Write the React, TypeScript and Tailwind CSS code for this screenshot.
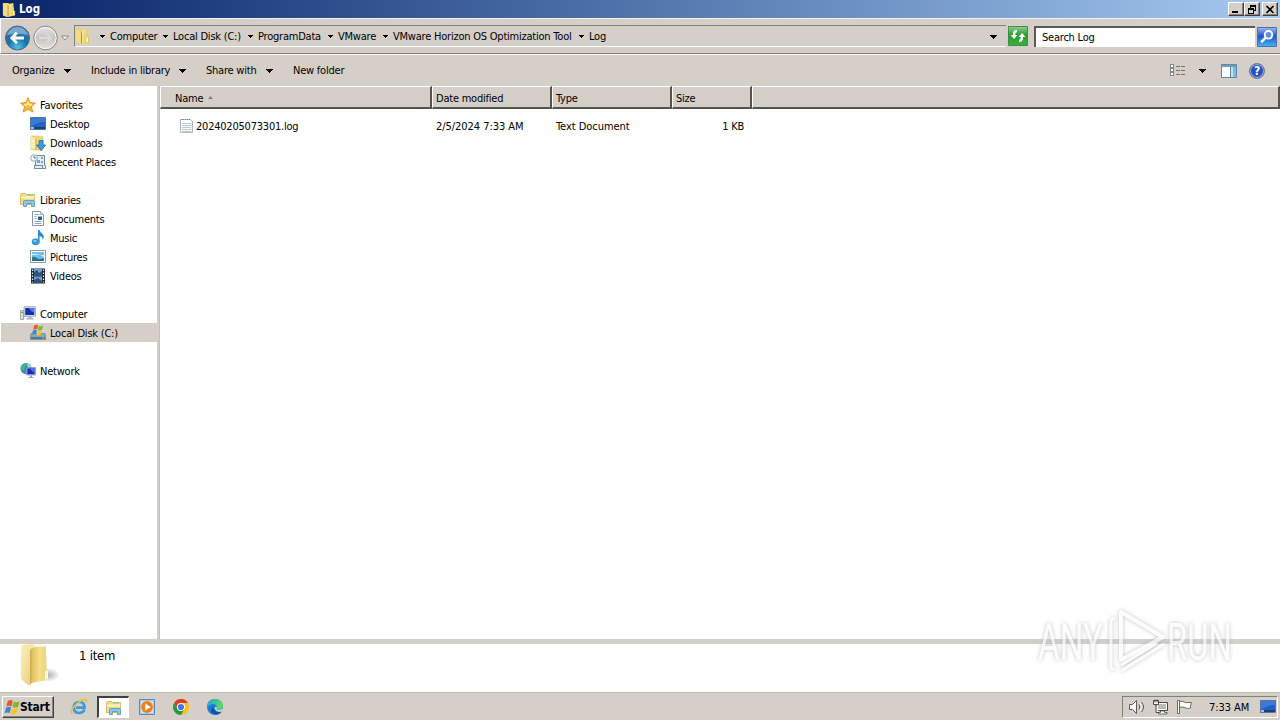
import type { ReactNode } from "react";

type IconProps = { className?: string };

function FolderIcon({ className = "h-4 w-4" }: IconProps) {
  return (
    <svg viewBox="0 0 16 16" className={`shrink-0 ${className}`}>
      <defs>
        <linearGradient id="folderFront" x1="0" x2="1" y1="0" y2="0.3">
          <stop offset="0" stopColor="#fdf3b0" />
          <stop offset="1" stopColor="#e3c650" />
        </linearGradient>
      </defs>
      <path d="M1 1h6l1 2v12l-3 1-4-2z" fill="#ecd168" />
      <path d="M6 2.500l6-1.500 1 8 1 1v4.500L6 16z" fill="url(#folderFront)" />
      <path d="M1 1l5 2.500V16l-5-2z" fill="#f3dc83" />
      <path d="M6 3.500L7 3v12.500l-1 .5z" fill="#b99232" />
      <path d="M11.500 9.500h1.500v4.500h-1.500z" fill="#fff" />
    </svg>
  );
}

function BigFolderIcon() {
  return (
    <svg viewBox="0 0 40 44" className="h-[44px] w-[40px] shrink-0">
      <defs>
        <linearGradient id="bigFront" x1="0" x2="1" y1="0" y2="0">
          <stop offset="0" stopColor="#dcbd5c" />
          <stop offset="0.5" stopColor="#f5e08a" />
          <stop offset="1" stopColor="#e8d07a" />
        </linearGradient>
        <linearGradient id="bigLeft" x1="0" x2="1" y1="0" y2="1">
          <stop offset="0" stopColor="#fbf0bd" />
          <stop offset="1" stopColor="#ecd07c" />
        </linearGradient>
        <radialGradient id="bigShadow">
          <stop offset="0" stopColor="#888" stopOpacity="0.7" />
          <stop offset="1" stopColor="#888" stopOpacity="0" />
        </radialGradient>
      </defs>
      <ellipse cx="27" cy="31" rx="13" ry="7" fill="url(#bigShadow)" />
      <path d="M2 1l10-1 3 2 11 1v33l-15 3z" fill="#f6e7a6" />
      <path d="M11 4l15-1.500.5 22 1.500 2v8l-2 1.500L11 39z" fill="url(#bigFront)" />
      <path d="M1 1l9 4q1 .5 1 2v32q-1 3-3 2l-6-5-1-2z" fill="url(#bigLeft)" />
      <path d="M10 5.500l1.500 1v32L10 41z" fill="#cfae58" />
      <path d="M25 27.500q3-3 3 1v6.500l-3 1z" fill="#fffbe0" />
    </svg>
  );
}

function StarIcon() {
  return (
    <svg viewBox="0 0 16 16" className="h-4 w-4 shrink-0">
      <path
        d="M8 .7l2.200 4.900 5.200.5-3.900 3.600 1.300 5.300L8 12.300 3.200 15l1.300-5.300L.6 6.100l5.200-.5z"
        fill="#fbb630"
        stroke="#e08a1c"
        strokeWidth="0.900"
      />
      <path d="M8 3l1.300 3.600 3.500.4-2.600 2.200L8 8 5 9.200 3.500 7l3-.4z" fill="#ffe79a" />
    </svg>
  );
}

function DesktopIcon({ className = "h-4 w-4" }: IconProps) {
  return (
    <svg viewBox="0 0 16 16" className={`shrink-0 ${className}`}>
      <path d="M.5 1.500h15v12H.5z" fill="#1b4fae" stroke="#56749f" />
      <path d="M1 2h14v4q-6 0-14 5z" fill="#3b7ad8" />
      <path d="M1 11q7-5 14-5v5z" fill="#2360c2" />
      <path d="M1 11h14v2H1z" fill="#1a3c78" />
      <path d="M1 11h3v2H1z" fill="#8cc7f0" />
    </svg>
  );
}

function DownloadsIcon() {
  return (
    <svg viewBox="0 0 16 16" className="h-4 w-4 shrink-0">
      <path d="M1 1h7l2 1 3-.5V15H4l-3-1z" fill="#f0d975" stroke="#d9b74c" strokeWidth="0.600" />
      <path d="M1 1l4.500 3v11L1 13z" fill="#fbefaf" />
      <path d="M5.500 4h1v11h-1z" fill="#c9a640" />
      <path
        d="M9 5.500h4V10h2.800L11 15.600 6.500 10H9z"
        fill="#3b9ade"
        stroke="#1f6dad"
        strokeWidth="0.800"
      />
    </svg>
  );
}

function RecentIcon() {
  return (
    <svg viewBox="0 0 16 16" className="h-4 w-4 shrink-0">
      <path d="M5.500 1.500h9v10h1v3h-11v-3h1z" fill="#e4edf3" stroke="#71889a" />
      <path d="M7 6h3v3H7zM11 3h2v2h-2zM11 7h2v2h-2z" fill="#7ba4c0" />
      <path d="M4.500 11.500h8v3" fill="none" stroke="#71889a" />
      <circle cx="4" cy="4" r="3.300" fill="#f5f9fc" stroke="#8a9dac" strokeWidth="0.900" />
      <path d="M4 2v2h2" fill="none" stroke="#4f687d" strokeWidth="0.900" />
    </svg>
  );
}

function LibraryIcon({ className = "h-4 w-4" }: IconProps) {
  return (
    <svg viewBox="0 0 16 16" className={`shrink-0 ${className}`}>
      <path d="M.5 2.500l1-1h4l1 1h8v10H.5z" fill="#f1dc83" stroke="#cfae4c" strokeWidth="0.800" />
      <path d="M7 2h6v1.500H7z" fill="#8fc785" />
      <path d="M1 4.500h13.500v2H1z" fill="#fdf6ca" />
      <path
        d="M3.500 14.500v-5q0-1 1-1h9q1 0 1 1v5h-3v-3h-5v3z"
        fill="#8ac9ec"
        stroke="#4b94c4"
        strokeWidth="0.800"
      />
    </svg>
  );
}

function DocumentIcon() {
  return (
    <svg viewBox="0 0 16 16" className="h-4 w-4 shrink-0">
      <path d="M2.500.5h8l3 3v11h-11z" fill="#fff" stroke="#8795a3" />
      <path d="M10.500.5v3h3" fill="#dfe6ec" stroke="#8795a3" strokeWidth="0.700" />
      <path d="M4.500 3.500h5M4.500 5.500h2M4.500 7.500h2M4.500 10.500h7M4.500 12.500h7" stroke="#86a9cc" />
      <path d="M8 5.500h4V9H8z" fill="#285b97" />
    </svg>
  );
}

function MusicIcon() {
  return (
    <svg viewBox="0 0 16 16" className="h-4 w-4 shrink-0">
      <path d="M8 0h1.500q.5 2.500 3 4 2.200 2 .3 6-.1-3.500-3.300-4V12H8z" fill="#2d88ce" />
      <ellipse cx="5.700" cy="11.800" rx="4" ry="3.400" fill="#3597da" />
      <ellipse cx="5" cy="11" rx="1.800" ry="1.100" fill="#8fd0f7" />
    </svg>
  );
}

function PictureIcon() {
  return (
    <svg viewBox="0 0 16 16" className="h-4 w-4 shrink-0">
      <path d="M.5 1.500h15v12H.5z" fill="#fff" stroke="#8d9aa6" />
      <path d="M2 3h12v9H2z" fill="#70bde8" />
      <path d="M2 5q5-1 12 3V6H2z" fill="#d2effb" />
      <path d="M2 8q3-1 5 1t7 0v3H2z" fill="#2e7f82" />
      <path d="M2 10.500h12V12H2z" fill="#2769a8" />
    </svg>
  );
}

function VideoIcon() {
  return (
    <svg viewBox="0 0 16 16" className="h-4 w-4 shrink-0">
      <path d="M1 .5h14v15H1z" fill="#20242b" />
      <path d="M4 1h8v6.500H4zM4 8.500h8V15H4z" fill="#6aa5d2" />
      <path d="M4 4l3-2 2 3 3-2v4.500H4zM4 12l4-2 4 3v2H4z" fill="#2b5485" />
      <path
        d="M2.500 1.500v13M13.500 1.500v13"
        stroke="#e6edf2"
        strokeWidth="1.300"
        strokeDasharray="1.500 1.500"
      />
    </svg>
  );
}

function ComputerIcon() {
  return (
    <svg viewBox="0 0 16 16" className="h-4 w-4 shrink-0">
      <path d="M.5 4.500h3v9h-3z" fill="#d8dee0" stroke="#8b9798" strokeWidth="0.800" />
      <path d="M1 6h2v1H1z" fill="#59b34c" />
      <path d="M4 .8h11.500v9.500H4z" fill="#dce3ee" stroke="#8d99b5" strokeWidth="0.800" />
      <path d="M5.200 2h9.100v7H5.200z" fill="#1a2fae" />
      <path d="M9 2h5.300v4.500q-3-.5-5.300-4.500z" fill="#5578e2" />
      <path d="M8.500 10.500h3v1.500h2v1.500h-7V12h2z" fill="#a8b2c0" />
    </svg>
  );
}

function FlagPanes() {
  return (
    <>
      <path d="M3.500 2.500q2.500-1.800 4.800-.2L7 7.600q-2.300-1.500-4.900.2z" fill="#e8572a" />
      <path d="M9.300 2.800q2.500 1.400 5.400-.2l-1.500 5.300q-2.700 1.500-5.200.1z" fill="#7cba36" />
      <path d="M1.900 8.700q2.500-1.600 4.800-.2l-1.400 5.200Q3 12.300.4 13.900z" fill="#3b86d6" />
      <path d="M7.700 9q2.500 1.400 5.300-.2l-1.500 5.300q-2.600 1.600-5.200.2z" fill="#fbc32a" />
    </>
  );
}

function WindowsFlag({ className = "h-4 w-4" }: IconProps) {
  return (
    <svg viewBox="0 0.5 15 15" className={`shrink-0 ${className}`}>
      <FlagPanes />
    </svg>
  );
}

function DiskIcon() {
  return (
    <svg viewBox="0 0 16 16" className="h-4 w-4 shrink-0">
      <path d="M1 8.500h14l.7 2v4H.3v-4z" fill="#8ea7b5" stroke="#5f7684" strokeWidth="0.600" />
      <path d="M1 12h14v2H1z" fill="#4c7d96" />
      <path d="M12 12.500h2v1h-2z" fill="#6fe05a" />
      <g transform="translate(1.500 -1.500) scale(.8)">
        <FlagPanes />
      </g>
    </svg>
  );
}

function NetworkIcon() {
  return (
    <svg viewBox="0 0 16 16" className="h-4 w-4 shrink-0">
      <circle cx="6" cy="5.500" r="5.500" fill="#2c8fc4" />
      <path d="M1.500 3q2-2.700 5-2.500 1 2-1 3t-1 3-3 1q-1.500-2 0-4.500z" fill="#4fb374" />
      <path d="M7 1q3 0 4 3l-3 1z" fill="#9fdcf4" />
      <path d="M6.500 4.500h9v7.500h-9z" fill="#cfd9ea" stroke="#7584a8" strokeWidth="0.700" />
      <path d="M7.300 5.300h7.400v6H7.300z" fill="#172cb4" />
      <path d="M10.500 5.300h4.200v4q-3.200 0-4.200-4z" fill="#5273e4" />
      <path d="M10 12.500h2V14h1.500v1h-5v-1H10z" fill="#9aa5ba" />
    </svg>
  );
}

function TextFileIcon() {
  return (
    <svg viewBox="0 0 16 16" className="h-4 w-4 shrink-0">
      <path d="M1.500 1.500h10l2 2v11h-12z" fill="#fbfcfd" stroke="#b3b8bd" />
      <path d="M3 5.500h9M3 7.500h9M3 9.500h9M3 11.500h9M3 13.500h9" stroke="#bccbd3" />
      <path d="M2 1.500h9" stroke="#777f86" strokeDasharray="1 1" />
    </svg>
  );
}

function BackForward() {
  return (
    <svg viewBox="0 0 66 28" className="mt-[3px] h-7 w-[66px] shrink-0">
      <defs>
        <radialGradient id="backFill" cx="0.5" cy="0.900" r="0.850">
          <stop offset="0" stopColor="#4fc3ec" />
          <stop offset="0.500" stopColor="#1470ae" />
          <stop offset="1" stopColor="#3e78a8" />
        </radialGradient>
        <linearGradient id="fwdFill" x1="0" x2="0" y1="0" y2="1">
          <stop offset="0" stopColor="#e9e8e6" />
          <stop offset="0.500" stopColor="#c5c3c0" />
          <stop offset="1" stopColor="#e6e4e1" />
        </linearGradient>
      </defs>
      <circle cx="13.500" cy="14" r="12" fill="url(#backFill)" stroke="#51667c" />
      <path d="M3 11q3-8 10.500-8T24 11q-10-2-21 0z" fill="#a5c9e2" opacity="0.600" />
      <path d="M20 14H8.500M13 8.800L7.800 14l5.200 5.200" fill="none" stroke="#fff" strokeWidth="2.800" />
      <circle cx="41.500" cy="14" r="11.800" fill="url(#fwdFill)" stroke="#85878a" />
      <circle cx="41.500" cy="14" r="10.600" fill="none" stroke="#f5f5f4" />
      <path d="M35 14h12M42.500 9.500L47 14l-4.500 4.500" fill="none" stroke="#dcdad7" strokeWidth="2.200" />
      <path d="M57.500 12h7L61 16z" fill="#f4f2ef" stroke="#85827d" strokeWidth="0.900" />
    </svg>
  );
}

function Caret({ className = "" }: IconProps) {
  return (
    <svg viewBox="0 0 7 4" className={`h-1 w-[7px] shrink-0 ${className}`} shapeRendering="crispEdges">
      <path d="M0 0h7v1H0zM1 1h5v1H1zM2 2h3v1H2zM3 3h1v1H3z" fill="#000" />
    </svg>
  );
}

function SmallCaret({ className = "" }: IconProps) {
  return (
    <svg viewBox="0 0 5 3" className={`h-[3px] w-[5px] shrink-0 ${className}`} shapeRendering="crispEdges">
      <path d="M0 0h5v1H0zM1 1h3v1H1zM2 2h1v1H2z" fill="#000" />
    </svg>
  );
}

function RefreshIcon() {
  return (
    <svg viewBox="0 0 20 20" className="h-5 w-5 shrink-0">
      <defs>
        <linearGradient id="refreshFill" x1="0" x2="0" y1="0" y2="1">
          <stop offset="0" stopColor="#8fd18f" />
          <stop offset="0.450" stopColor="#279a32" />
          <stop offset="1" stopColor="#38b53c" />
        </linearGradient>
      </defs>
      <path d="M.5.5h19v19H.5z" fill="url(#refreshFill)" stroke="#3f8d48" />
      <path d="M9 4Q4.500 4 5 9H2.500L6 13l3.500-4H7.300Q7 6.500 9 6z" fill="#fff" />
      <path d="M11 16q4.500 0 4-5h2.500L14 7l-3.500 4h2.200q.3 2.500-1.700 3z" fill="#fff" />
    </svg>
  );
}

function SearchIcon() {
  return (
    <svg viewBox="0 0 20 20" className="h-5 w-5 shrink-0">
      <defs>
        <linearGradient id="searchFill" x1="0" x2="0" y1="0" y2="1">
          <stop offset="0" stopColor="#9db8ee" />
          <stop offset="0.450" stopColor="#2453ca" />
          <stop offset="1" stopColor="#43b5f5" />
        </linearGradient>
      </defs>
      <path d="M.5.5h19v19H.5z" fill="url(#searchFill)" stroke="#4c6fae" />
      <circle cx="11.500" cy="7.800" r="3.800" fill="#5b8ce6" stroke="#fff" strokeWidth="1.900" />
      <path d="M8.700 10.600l-4.500 4.500" stroke="#fff" strokeWidth="2.600" />
    </svg>
  );
}

function ViewIcon() {
  return (
    <svg viewBox="0 0 16 13" className="h-[13px] w-4 shrink-0" shapeRendering="crispEdges">
      <path d="M.5.5h3v3h-3zM.5 4.500h3v3h-3zM.5 8.500h3v3h-3z" fill="#fff" stroke="#83878c" />
      <path d="M6 2.500h4M11 2.500h4M6 6.500h4M11 6.500h4M6 10.500h4M11 10.500h4" stroke="#6f7276" />
    </svg>
  );
}

function PreviewIcon() {
  return (
    <svg viewBox="0 0 16 14" className="h-[14px] w-4 shrink-0">
      <path d="M.5.5h15v13H.5z" fill="#fff" stroke="#5f86a5" />
      <path d="M1 1h14v2H1z" fill="#6e9dc0" />
      <path d="M10 3h5v10h-5z" fill="#79bfe0" />
      <path d="M10 3h2v10h-2z" fill="#bfe3f2" />
      <path d="M9.500 3v10" stroke="#5f86a5" />
    </svg>
  );
}

function HelpIcon() {
  return (
    <span className="flex h-4 w-4 items-center justify-center rounded-full border border-[#74829f] bg-[#2b50bd] text-[12px] leading-none font-bold text-white shadow-[inset_0_0_0_1px_#93a9e0]">
      ?
    </span>
  );
}

function IeIcon() {
  return (
    <svg viewBox="0 0 18 18" className="h-[18px] w-[18px]">
      <path
        d="M14.500 11.500Q13 15 9.200 15 4 15 3.700 9.600 4 4.200 9.200 4t5.400 5.700H6"
        fill="none"
        stroke="#3d9bdc"
        strokeWidth="2.700"
      />
      <path
        d="M2.500 16Q-.5 14 4 8.500T14.500 1.500q3-.5 1.800 3"
        fill="none"
        stroke="#e9bd3b"
        strokeWidth="1.500"
      />
    </svg>
  );
}

function MediaIcon() {
  return (
    <svg viewBox="0 0 16 16" className="h-4 w-4">
      <path d="M.5.5h15v15H.5z" fill="#a7cbea" stroke="#5589b9" />
      <path d="M2 2h12v12H2z" fill="#cfe2f2" />
      <circle cx="8" cy="8" r="5.900" fill="#f07f18" />
      <path d="M6.200 4.500L11.700 8l-5.500 3.500z" fill="#fff" />
    </svg>
  );
}

function ChromeIcon() {
  return (
    <svg viewBox="0 0 16 16" className="h-4 w-4">
      <circle cx="8" cy="8" r="8" fill="#fbc116" />
      <path d="M1.070 4A8 8 0 0 1 14.930 4H8a4 4 0 0 0-3.460 6z" fill="#e33b2e" />
      <path d="M1.070 4A8 8 0 0 0 8 16l3.460-6a4 4 0 0 1-6.920 0z" fill="#229a4b" />
      <circle cx="8" cy="8" r="4" fill="#fff" />
      <circle cx="8" cy="8" r="3.100" fill="#3b78e7" />
    </svg>
  );
}

function EdgeIcon() {
  return (
    <svg viewBox="0 0 16 16" className="h-4 w-4">
      <defs>
        <linearGradient id="edgeTop" x1="0" x2="1" y1="0" y2="0.300">
          <stop offset="0" stopColor="#279ee3" />
          <stop offset="1" stopColor="#5cda64" />
        </linearGradient>
      </defs>
      <circle cx="8" cy="8" r="8" fill="#1a7fd4" />
      <path
        d="M0 8.500Q0 0 8 0q7.500.2 8 6.500 0 4-4 4.200-2.800 0-2.500-1.500 1.200-1.500-.2-3Q4.500 3 0 8.500z"
        fill="url(#edgeTop)"
      />
      <path d="M9.500 9.300q-.2 1.700 2.500 1.600 2-.1 3.600-1.400l1 1-1.600 1.800q-5 2-7.500-2.500 0-2 1.900-2.400 1 .9.100 1.900z" fill="#d5cfc8" />
      <path d="M6.500 8q.4 6 8 5.300l-1.300 1Q8 17 4.500 13.500 3 9.500 6.500 8z" fill="#1552a0" />
    </svg>
  );
}

function SpeakerIcon() {
  return (
    <svg viewBox="0 0 18 16" className="h-4 w-[18px]">
      <path d="M1.500 5.500h3l4-4v13l-4-4h-3z" fill="#fff" stroke="#5f5c58" />
      <path d="M11 5.500q1.500 2.500 0 5M13.500 3q4 5 0 10" fill="none" stroke="#5f5c58" />
      <path d="M12.200 4.200q2.800 3.800 0 7.600" fill="none" stroke="#fff" />
    </svg>
  );
}

function TrayNetworkIcon() {
  return (
    <svg viewBox="0 0 17 16" className="h-4 w-[17px]">
      <path d="M4.500 3.500h11v8h-11z" fill="#bdbab5" stroke="#4e4b48" />
      <path d="M5.500 4.500h9v6h-9z" fill="none" stroke="#fff" />
      <path d="M8.500 12h4v1.500H15v1.500H6.500v-1.500h2z" fill="#fff" stroke="#4e4b48" strokeWidth="0.800" />
      <path d="M1.500 1.500h5v4h-5zM4 5.500v8h3" fill="#fff" stroke="#4e4b48" />
      <path d="M3 .5v3M5 .5v3" stroke="#4e4b48" />
    </svg>
  );
}

function FlagIcon() {
  return (
    <svg viewBox="0 0 17 16" className="h-4 w-[17px]">
      <path d="M1.500 1.500h2v13h-2z" fill="#fff" stroke="#5f5c58" strokeWidth="0.900" />
      <path d="M3.500 2.500q3-1 5 .7 1.500 1 3 .3h4q-1 2-1 5.500-3 1.200-5.500-.3-2-1.300-5.500-.2z" fill="#fff" stroke="#5f5c58" strokeWidth="0.900" />
    </svg>
  );
}

const crumbs = [
  { name: "Computer", width: "w-[47px]" },
  { name: "Local Disk (C:)", width: "w-[69px]" },
  { name: "ProgramData", width: "w-[64px]" },
  { name: "VMware", width: "w-[39px]" },
  { name: "VMware Horizon OS Optimization Tool", width: "w-[180px]" },
  { name: "Log", width: "w-[20px]" },
];

type TreeRow = { label: string; icon: ReactNode; child?: boolean; selected?: boolean } | null;

// null is an empty row between two groups
const tree: TreeRow[] = [
  { label: "Favorites", icon: <StarIcon /> },
  { label: "Desktop", icon: <DesktopIcon />, child: true },
  { label: "Downloads", icon: <DownloadsIcon />, child: true },
  { label: "Recent Places", icon: <RecentIcon />, child: true },
  null,
  { label: "Libraries", icon: <LibraryIcon /> },
  { label: "Documents", icon: <DocumentIcon />, child: true },
  { label: "Music", icon: <MusicIcon />, child: true },
  { label: "Pictures", icon: <PictureIcon />, child: true },
  { label: "Videos", icon: <VideoIcon />, child: true },
  null,
  { label: "Computer", icon: <ComputerIcon /> },
  { label: "Local Disk (C:)", icon: <DiskIcon />, child: true, selected: true },
  null,
  { label: "Network", icon: <NetworkIcon /> },
];

const columns = [
  { name: "Name", cls: "w-[272px] pl-[14px]" },
  { name: "Date modified", cls: "w-[120px] pl-[3px]" },
  { name: "Type", cls: "w-[120px] pl-[3px]" },
  { name: "Size", cls: "w-[80px] pl-[3px]" },
  { name: "", cls: "flex-1" },
];

function WindowButton({ children, className = "" }: { children: ReactNode; className?: string }) {
  return (
    <button
      className={`flex h-[14px] w-4 items-center justify-center border border-t-white border-r-[#404040] border-b-[#404040] border-l-white bg-[#d5cfc8] shadow-[inset_-1px_-1px_0_#87837d] ${className}`}
    >
      {children}
    </button>
  );
}

function TitleBar() {
  return (
    <header className="flex h-[18px] shrink-0 items-center bg-linear-to-r from-[#0a246a] to-[#a6caf0] pr-0.5 pl-[2px]">
      <FolderIcon className="h-[15px] w-[15px]" />
      <span className="ml-[2px] flex-1 text-[11.500px] font-bold tracking-normal text-white">Log</span>
      <WindowButton>
        <svg viewBox="0 0 10 9" className="h-[9px] w-[10px]" shapeRendering="crispEdges">
          <path d="M1 6h6v2H1z" />
        </svg>
      </WindowButton>
      <WindowButton>
        <svg viewBox="0 0 10 9" className="h-[9px] w-[10px]" shapeRendering="crispEdges">
          <path d="M3 0h6v6H7V5h1V2H4v1H3z" />
          <path d="M1 3h6v6H1zM2 5v3h4V5z" fillRule="evenodd" />
        </svg>
      </WindowButton>
      <WindowButton className="ml-[2px]">
        <svg viewBox="0 0 10 9" className="h-[9px] w-[10px]">
          <path d="M1.500 1l7 7M8.500 1l-7 7" stroke="#000" strokeWidth="1.700" />
        </svg>
      </WindowButton>
    </header>
  );
}

function AddressBar() {
  return (
    <div className="flex h-[36px] shrink-0 items-center border-t border-b border-l border-t-[#f4f2ee] border-b-[#808080] border-l-white pr-[3px] pl-[3px]">
      <BackForward />
      <div className="ml-1 flex h-[22px] w-[932px] items-center border-t border-b border-l border-t-[#808080] border-b-white border-l-[#808080]">
        <FolderIcon />
        <div className="ml-[7px] flex items-center">
          {crumbs.map((c) => (
            <div key={c.name} className="flex items-center">
              <SmallCaret className="mr-[5px] ml-[2px]" />
              <span className={`mr-[4px] whitespace-nowrap ${c.width}`}>{c.name}</span>
            </div>
          ))}
        </div>
        <Caret className="mt-px mr-[9px] ml-auto" />
      </div>
      <div className="ml-[2px]">
        <RefreshIcon />
      </div>
      <div className="ml-[6px] flex h-[21px] flex-1 items-center border-t-2 border-l-2 border-t-[#5b5955] border-l-[#5b5955] bg-white pl-[6px]">
        Search Log
      </div>
      <div className="mt-px ml-0.5">
        <SearchIcon />
      </div>
    </div>
  );
}

function CommandBar() {
  return (
    <div className="flex h-[32px] shrink-0 items-center border-t border-white pr-[15px] pl-3">
      <span className="w-[52px]">Organize</span>
      <Caret />
      <span className="ml-5 w-[88px] whitespace-nowrap">Include in library</span>
      <Caret />
      <span className="ml-5 w-[60px] whitespace-nowrap">Share with</span>
      <Caret />
      <span className="ml-5">New folder</span>
      <div className="ml-auto flex items-center">
        <ViewIcon />
        <Caret className="mr-[15px] ml-[13px]" />
        <PreviewIcon />
        <div className="ml-3">
          <HelpIcon />
        </div>
      </div>
    </div>
  );
}

function Sidebar() {
  return (
    <nav className="w-[157px] shrink-0 bg-white pt-[9px]">
      {tree.map((row, i) =>
        row ? (
          <div
            key={i}
            className={`ml-px flex h-[19px] items-center gap-1 ${row.child ? "pl-[29px]" : "pl-[19px]"} ${row.selected ? "bg-[#d5cfc8]" : ""}`}
          >
            {row.icon}
            <span className="pt-[2px]">{row.label}</span>
          </div>
        ) : (
          <div key={i} className="h-[19px]" />
        ),
      )}
    </nav>
  );
}

function FileList() {
  return (
    <main className="flex-1 bg-white">
      <div className="flex h-[23px] bg-[#d5cfc8]">
        {columns.map((c) => (
          <div
            key={c.name}
            className={`flex items-center border-t border-r-2 border-b-2 border-l border-t-white border-r-[#55524f] border-b-[#55524f] border-l-white pt-[2px] ${c.cls}`}
          >
            {c.name}
            {c.name === "Name" && (
              <svg viewBox="0 0 5 3" className="mb-[2px] ml-[5px] h-[3px] w-[5px]">
                <path d="M2.500 0L5 3H0z" fill="#85817c" />
              </svg>
            )}
          </div>
        ))}
      </div>
      <div className="mt-[7px] flex h-[19px] items-center">
        <div className="flex w-[276px] items-center gap-px pl-[19px]">
          <TextFileIcon />
          <span className="pt-[2px]">20240205073301.log</span>
        </div>
        <span className="w-[120px] pt-[2px] tracking-[-0.050px]">2/5/2024 7:33 AM</span>
        <span className="w-[120px] pt-[2px] tracking-[-0.050px]">Text Document</span>
        <span className="w-[68px] pt-[2px] text-right">1 KB</span>
      </div>
    </main>
  );
}

function Taskbar() {
  return (
    <footer className="flex h-[28px] shrink-0 items-center border-t border-[#bdb9b2] pt-px">
      <button className="ml-[2px] flex h-[22px] w-[52px] items-center border border-t-white border-r-[#404040] border-b-[#404040] border-l-white pl-px text-[12px] font-bold tracking-[-0.200px] shadow-[inset_-1px_-1px_0_#87837d]">
        <WindowsFlag className="h-4 w-4" />
        Start
      </button>
      <div className="ml-[16px]">
        <IeIcon />
      </div>
      <div className="ml-[9px] flex h-[22px] w-[32px] items-center justify-center border border-t-2 border-l-2 border-t-[#404040] border-r-white border-b-white border-l-[#404040] bg-white">
        <LibraryIcon />
      </div>
      <div className="ml-[10px]">
        <MediaIcon />
      </div>
      <div className="ml-[18px]">
        <ChromeIcon />
      </div>
      <div className="ml-[18px]">
        <EdgeIcon />
      </div>
      <div className="mr-[2px] ml-auto flex h-[22px] w-[156px] items-center border border-t-[#808080] border-r-white border-b-white border-l-[#808080] pl-[5px]">
        <SpeakerIcon />
        <div className="ml-[6px]">
          <TrayNetworkIcon />
        </div>
        <div className="ml-[7px]">
          <FlagIcon />
        </div>
        <span className="ml-[16px] w-[42px] tracking-[-0.050px] whitespace-nowrap">7:33 AM</span>
        <DesktopIcon className="ml-[9px] h-4 w-4" />
      </div>
    </footer>
  );
}

function Watermark() {
  return (
    <svg
      viewBox="0 0 210 80"
      className="pointer-events-none absolute top-[601px] left-[1031px] h-[80px] w-[210px] overflow-visible opacity-70 drop-shadow-[0_0_2px_#aaa]"
    >
      <g fill="#fcfcfc" className="font-[Roboto,sans-serif] text-[52px] font-normal tracking-normal">
        <text x="7" y="59" textLength="65" lengthAdjust="spacingAndGlyphs">
          ANY
        </text>
        <text x="136" y="59" textLength="65" lengthAdjust="spacingAndGlyphs">
          RUN
        </text>
      </g>
      <g fill="none" stroke="#fcfcfc" strokeWidth="4" strokeLinejoin="round">
        <path d="M90 11l42 25-42 23z" />
        <path d="M84 17l-4 2v48l4 2" strokeWidth="3" />
        <path d="M90 70l43-27M90 64l36-22" strokeWidth="3" />
      </g>
    </svg>
  );
}

export default function App() {
  return (
    <div className="relative flex h-[720px] w-[1280px] flex-col overflow-hidden bg-[#d5cfc8] font-['DejaVu_Sans_Condensed','DejaVu_Sans',sans-serif] text-[11px] leading-[13px] tracking-[-0.220px] text-black">
      <TitleBar />
      <AddressBar />
      <CommandBar />
      <div className="flex min-h-0 flex-1">
        <Sidebar />
        <div className="w-[3px] shrink-0 border-r border-[#c3beb7]" />
        <FileList />
      </div>
      <div className="mt-[5px] flex h-[48px] shrink-0 bg-white pl-5">
        <BigFolderIcon />
        <span className="mt-[5px] ml-[19px] text-[13px]">1 item</span>
      </div>
      <Taskbar />
      <Watermark />
    </div>
  );
}
